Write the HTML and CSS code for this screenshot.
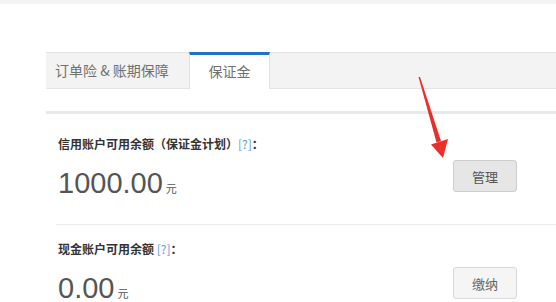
FILE: index.html
```html
<!DOCTYPE html>
<html lang="zh-CN">

<head>
    <meta charset="UTF-8">
    <meta name="viewport" content="width=device-width, initial-scale=1.0">
    <title>保证金</title>
    <link rel="stylesheet" href="styles.css">
</head>

<body>
    <div class="top-strip"></div>

    <div class="panel">
        <div class="tabs">
            <div class="tab">订单险 &amp; 账期保障</div>
            <div class="tab active">保证金</div>
        </div>
        <div class="rule"></div>

        <div class="accounts">
            <!-- Credit account -->
            <div class="account">
                <div class="account-info">
                    <div class="label">信用账户可用余额（保证金计划）<span class="help">[?]</span>：</div>
                    <div class="amount">1000.00<span class="unit">元</span></div>
                </div>
                <button class="btn btn-manage">管理</button>
            </div>

            <!-- Cash account -->
            <div class="account">
                <div class="account-info">
                    <div class="label">现金账户可用余额 <span class="help">[?]</span>：</div>
                    <div class="amount">0.00<span class="unit">元</span></div>
                </div>
                <button class="btn btn-pay">缴纳</button>
            </div>
        </div>
    </div>

    <!-- annotation arrow -->
    <svg class="arrow" width="556" height="302" viewBox="0 0 556 302">
        <polygon points="418.5,77 420,77 441,141 436.5,142.5" fill="#ea2f2a" />
        <polygon points="431,144.5 448,139 443,158" fill="#ea2f2a" />
    </svg>
</body>

</html>
```

FILE: styles.css
```css
body {
    margin: 0;
    padding: 0;
    font-family: "Liberation Sans", "Noto Sans CJK SC", sans-serif;
    background-color: #ffffff;
    color: #333;
    width: 556px;
    height: 302px;
    overflow: hidden;
    position: relative;
}

.top-strip {
    height: 4px;
    background-color: #f4f4f4;
}

.panel {
    margin-left: 46px;
    margin-top: 48px;
}

.tabs {
    display: flex;
    height: 35px;
    background-color: #f3f3f3;
    border-top: 1px solid #e4e4e4;
    border-bottom: 1px solid #e4e4e4;
}

.tab {
    box-sizing: border-box;
    height: 35px;
    line-height: 35px;
    font-family: "Noto Sans CJK SC", sans-serif;
    font-size: 14px;
    color: #707070;
    padding-left: 9px;
    width: 143px;
    white-space: pre;
}

.tab.active {
    width: 81px;
    margin-top: -1px;
    height: 37px;
    line-height: 33px;
    padding-left: 0;
    text-align: center;
    background-color: #fff;
    border-top: 3px solid #1f74c1;
    border-left: 1px solid #e0e0e0;
    border-right: 1px solid #e0e0e0;
}

.rule {
    margin-top: 22px;
    height: 3px;
    background-color: #e9e9e9;
}

.accounts {
    margin-left: 10px;
}

.account {
    display: flex;
    justify-content: space-between;
    align-items: flex-start;
    padding: 22px 39px 24px 2px;
}

.account + .account {
    border-top: 1px solid #ededed;
    padding-top: 16px;
}

.label {
    font-family: "Noto Sans CJK SC", sans-serif;
    font-size: 12px;
    line-height: 16px;
    font-weight: bold;
    color: #333;
}

.help {
    font-weight: normal;
    color: #5b9bd8;
}

.amount {
    margin-top: 14px;
    font-size: 29px;
    line-height: 34px;
    height: 34px;
    color: #555;
}

.unit {
    font-family: "Noto Sans CJK SC", sans-serif;
    font-size: 11px;
    line-height: 1;
    margin-left: 3px;
    color: #555;
}

.btn {
    width: 64px;
    height: 32px;
    border-radius: 3px;
    font-family: "Noto Sans CJK SC", sans-serif;
    font-size: 13px;
    color: #555;
    cursor: pointer;
}

.btn-manage {
    margin-top: 24px;
    background-color: #e6e6e6;
    border: 1px solid #cdcdcd;
}

.btn-pay {
    margin-top: 26px;
    background-color: #f5f5f5;
    border: 1px solid #d9d9d9;
    color: #666;
}

.arrow {
    position: absolute;
    left: 0;
    top: 0;
    pointer-events: none;
}
```
